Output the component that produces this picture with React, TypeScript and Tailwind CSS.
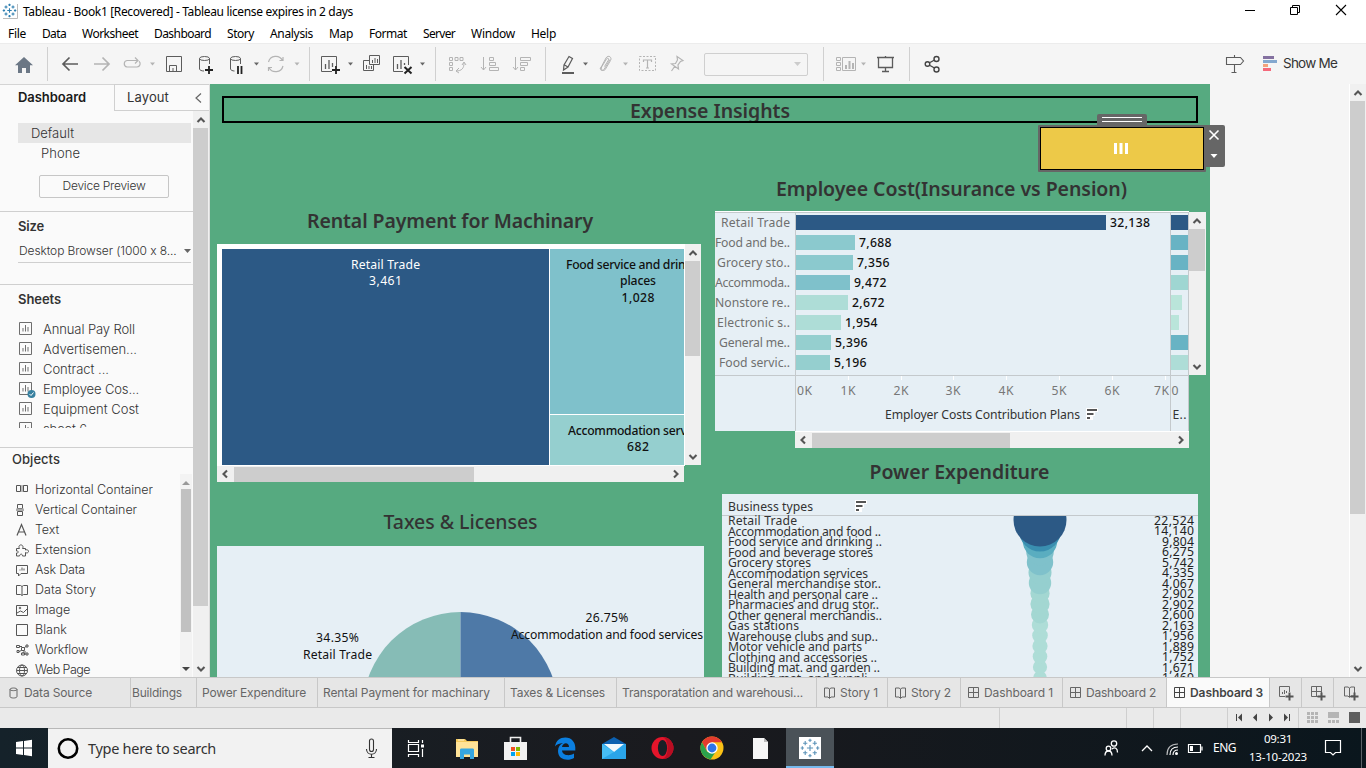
import { useLayoutEffect, useRef } from "react";
import type { ReactNode } from "react";

/* Text run that is tracked so that it fills exactly `w` pixels. */
function Fit({ w, className = "", children }: { w: number; className?: string; children: string }) {
  const ref = useRef<HTMLSpanElement>(null);
  useLayoutEffect(() => {
    const el = ref.current;
    if (!el) return;
    el.style.letterSpacing = "0px";
    const natural = el.getBoundingClientRect().width;
    el.style.letterSpacing = `${(w - natural) / children.length}px`;
  }, [w, children]);
  return (
    <span ref={ref} className={`inline-block shrink-0 whitespace-pre ${className}`}>
      {children}
    </span>
  );
}

/* Drawing slot: its inner coordinates start at (x, y). */
function Slot({ x, y, w, h, children }: { x: number; y: number; w: number; h: number; children?: ReactNode }) {
  return (
    <svg className="block shrink-0" width={w} height={h} viewBox={`${x} ${y} ${w} ${h}`} fill="none">
      {children}
    </svg>
  );
}

const Tool = ({ x, w, children }: { x: number; w: number; children?: ReactNode }) => (
  <Slot x={x} y={44} w={w} h={40}>{children}</Slot>
);

const Caret = ({ x, y = 64, c = "#666" }: { x: number; y?: number; c?: string }) => (
  <path d={`M${x - 2.5} ${y - 1.5}h5l-2.5 3z`} fill={c} />
);

const Divider = () => <div className="h-[34px] w-px shrink-0 bg-[#d0d0d0]" />;

/* ---------- scroll bars ---------- */
function Chevron({ dir }: { dir: "up" | "down" | "left" | "right" }) {
  const d = {
    up: "M1.5 7 5 3.5 8.500 7",
    down: "M1.500 3 5 6.500 8.500 3",
    left: "M7 1.500 3.500 5 7 8.500",
    right: "M3 1.500 6.500 5 3 8.500",
  }[dir];
  return (
    <svg width="10" height="10" viewBox="0 0 10 10" fill="none" stroke="#555" strokeWidth="2.100">
      <path d={d} />
    </svg>
  );
}

function VScroll({ className, thumb }: { className: string; thumb: string }) {
  return (
    <div className={`flex shrink-0 flex-col justify-between bg-[#f0f0f0] ${className}`}>
      <div>
        <div className="flex h-[17px] items-center justify-center pr-px"><Chevron dir="up" /></div>
        <div className={`mr-px bg-[#cdcdcd] ${thumb}`} />
      </div>
      <div className="flex h-[17px] items-center justify-center pr-px"><Chevron dir="down" /></div>
    </div>
  );
}

function HScroll({ className, thumb }: { className: string; thumb: string }) {
  return (
    <div className={`flex h-4 shrink-0 items-center justify-between bg-[#f0f0f0] ${className}`}>
      <div className="flex items-center">
        <div className="flex w-[17px] justify-center pr-px"><Chevron dir="left" /></div>
        <div className={`h-[15px] bg-[#cdcdcd] ${thumb}`} />
      </div>
      <div className="flex w-[17px] justify-center"><Chevron dir="right" /></div>
    </div>
  );
}

/* ---------- title, menu, toolbar ---------- */
function TableauMark({ cx, cy, s, c = "#2f7fb0" }: { cx: number; cy: number; s: number; c?: string }) {
  const plus = (x: number, y: number, r: number) => `M${x - r} ${y}h${2 * r}M${x} ${y - r}v${2 * r}`;
  return (
    <g stroke={c} strokeWidth={Math.max(1.1, s * 0.1)}>
      <path d={plus(cx, cy, 0.32 * s)} />
      <path
        d={
          plus(cx, cy - 0.8 * s, 0.17 * s) + plus(cx, cy + 0.8 * s, 0.17 * s) + plus(cx - 0.8 * s, cy, 0.17 * s) + plus(cx + 0.8 * s, cy, 0.17 * s) +
          plus(cx - 0.5 * s, cy - 0.5 * s, 0.22 * s) + plus(cx + 0.5 * s, cy - 0.5 * s, 0.22 * s) +
          plus(cx - 0.5 * s, cy + 0.5 * s, 0.22 * s) + plus(cx + 0.5 * s, cy + 0.5 * s, 0.22 * s)
        }
      />
    </g>
  );
}

function TitleBar() {
  return (
    <div className="flex h-[22px] items-center justify-between text-[12px] text-black">
      <div className="flex items-center">
        <Slot x={0} y={0} w={23} h={22}>
          <path d="M3 18.500h14.500V4" stroke="#bbb" />
          <TableauMark cx={9.5} cy={10.5} s={7} />
        </Slot>
        <Fit w={330} className="pt-0.5">Tableau - Book1 [Recovered] - Tableau license expires in 2 days</Fit>
      </div>
      <Slot x={1236} y={0} w={130} h={22}>
        <g stroke="#000">
          <path d="M1245 10.500h10" />
          <path d="M1290.500 7.500h7v7h-7zM1292.500 7v-1.500h7v7h-1.500" />
          <path d="m1336 5 10 10m0-10-10 10" strokeWidth="1.100" />
        </g>
      </Slot>
    </div>
  );
}

const menus: [string, number][] = [
  ["File", 18], ["Data", 24], ["Worksheet", 56], ["Dashboard", 57], ["Story", 27], ["Analysis", 43],
  ["Map", 24], ["Format", 38], ["Server", 32], ["Window", 44], ["Help", 25],
];

function Toolbar() {
  const d = "#5c5c5c";
  const l = "#b4b4b4";
  return (
    <div className="flex h-[41px] items-center border-t border-[#ececec] bg-[#f5f5f5]">
      <Tool x={0} w={47}>
        <path d="m24 57-9 8.300h3V73h4v-5h4v5h4v-7.700h3z" fill="#6b7785" />
      </Tool>
      <Divider />
      <Tool x={48} w={42}><path d="M78 64H63m6.500-6.500L63 64l6.500 6.500" stroke={d} strokeWidth="1.700" /></Tool>
      <Tool x={90} w={28}><path d="M94 64h15m-6.500-6.500L109 64l-6.500 6.500" stroke={l} strokeWidth="1.700" /></Tool>
      <Tool x={118} w={40}>
        <path d="M134 60.500h-7a3.300 3.300 0 0 0 0 6.500h10a3.300 3.300 0 0 0 2-5.800M130 60.500h8m-3-3 3 3-3 3" stroke={l} strokeWidth="1.200" />
        <Caret x={152.5} c={l} />
      </Tool>
      <Tool x={158} w={32}>
        <path d="M166.500 56.500h15v15h-15zM169.500 71v-5.500h7V71M173 71v-3" stroke={d} />
      </Tool>
      <Tool x={190} w={30}>
        <g stroke={d}><ellipse cx="204.500" cy="58.500" rx="5" ry="2" /><path d="M199.500 58.500V69c0 1 2 2 4.500 2M209.500 58.500V64" /></g>
        <path d="M209 66v8m-4-4h8" stroke="#222" strokeWidth="1.800" />
      </Tool>
      <Tool x={220} w={42}>
        <g stroke={d}><ellipse cx="235.500" cy="58.500" rx="5" ry="2" /><path d="M230.500 58.500V69c0 1 2 2 4 2M240.500 58.500V64" /></g>
        <path d="M238 66v8m3.500-8v8" stroke="#222" strokeWidth="1.800" />
        <Caret x={256.5} />
      </Tool>
      <Tool x={262} w={47}>
        <path d="M268.500 62a7.500 7.500 0 0 1 14-1.500M283 66a7.500 7.500 0 0 1-14 1.500M279.500 60.500h3.500v-3.500M272 67.500h-3.500v3.500" stroke={l} strokeWidth="1.200" />
        <Caret x={297} c={l} />
      </Tool>
      <Divider />
      <Tool x={310} w={50}>
        <path d="M332 71.500h-10.500v-15h15V66" stroke={d} />
        <path d="M325.500 69v-5m3.500 5v-9m3.500 7v-4" stroke={d} strokeWidth="1.300" />
        <path d="M336 66v8m-4-4h8" stroke="#222" strokeWidth="1.800" />
        <Caret x={350.5} />
      </Tool>
      <Tool x={360} w={26}>
        <path d="M369.500 55.500h10v9h-10zM369 60.500h-5.500v10h10V65M372.500 63v-3m2.500 3v-5m2.500 5v-4M366.500 69v-4m2.500 4v-3m2.500 3v-3" stroke={d} />
      </Tool>
      <Tool x={386} w={49}>
        <path d="M403 71.500h-9.500v-15h15V65" stroke={d} />
        <path d="M397.500 69v-5m3.500 5v-9m3.500 5v-2" stroke={d} strokeWidth="1.300" />
        <path d="m404.500 67 7 6.500m0-6.500-7 6.500" stroke="#222" strokeWidth="2" />
        <Caret x={422.5} />
      </Tool>
      <Divider />
      <Tool x={436} w={39}>
        <path d="M449.500 57.500h3v3h-3zM455 57.500h3v3h-3zM460 57.500h3v3h-3zM449.500 62.500h3v3h-3zM449.500 67.500h3v3h-3zM464 63c0 5-2 8-8 8m6-6 2-3 2 3m-7 3-3 3 3 2" stroke={l} />
      </Tool>
      <Tool x={475} w={30}>
        <path d="M483.500 57v13m-2.500-3 2.500 3 2.500-3M489.500 57.500h4v3h-4zM489.500 62.500h6v3h-6zM489.500 67.500h9v3h-9z" stroke={l} />
      </Tool>
      <Tool x={505} w={40}>
        <path d="M515.500 57v13m-2.500-3 2.500 3 2.500-3M520.500 57.500h10v3h-10zM520.500 62.500h7v3h-7zM520.500 67.500h4v3h-4z" stroke={l} />
      </Tool>
      <Divider />
      <Tool x={546} w={49}>
        <path d="m569 56.500 3.500 2-4.500 8.500-4.500 3 .500-5zM564.500 65l3.500 2" stroke={d} strokeWidth="1.200" />
        <path d="M562 73h12" stroke={d} strokeWidth="2" />
        <Caret x={585.5} />
      </Tool>
      <Tool x={595} w={40}>
        <path d="m602 65.500 4-7.500c2-3.500 6.500-1 4.500 2.500l-5 8.500c-1.500 3-5.500.800-4-2M602 65.500l-2 3.500m4.500-2.500 4-6.500c.8-1.500-1-2.500-2-1l-5.500 9c-1.500 2.500 1.500 3.500 3 1.500l6-10" stroke={l} />
        <Caret x={625.5} c={l} />
      </Tool>
      <Tool x={635} w={30}>
        <path d="M639.500 56.500h16v14h-16z" stroke={l} strokeDasharray="2 1.500" />
        <path d="M643.500 62v-2h8v2M647.500 60v8m-1.500 0h3" stroke={l} strokeWidth="1.200" />
      </Tool>
      <Tool x={665} w={39}>
        <path d="m677 56.500 6 4-2.500 1-2.500 3.500.5 4-7-5 4-.5 2-3.500zM675 66l-3.500 5" stroke={l} strokeWidth="1.200" />
      </Tool>
      <div className="flex h-[23px] w-[104px] items-center justify-end rounded-[2px] border border-[#cfcfcf] pr-1.5">
        <svg width="7" height="4"><path d="M0 0h7L3.500 4z" fill="#ccc" /></svg>
      </div>
      <div className="w-[15px] shrink-0" />
      <Divider />
      <Tool x={824} w={51}>
        <path d="M836.500 57.500h4v3h-4zM836.500 62.500h4v3h-4zM836.500 67.500h4v3h-4zM842.500 57.500h13v13h-13z" stroke={l} />
        <path d="M846 69v-4m3.500 4v-8m3.500 8v-6" stroke={l} strokeWidth="2" />
        <Caret x={863.5} c={l} />
      </Tool>
      <Tool x={875} w={34}>
        <path d="M877 57.500h17M885.500 56v1.500M885.500 68v3.500m-3.500 0h7" stroke={d} strokeWidth="1.300" />
        <path d="M878.500 58v9.500h14V58" stroke={d} strokeWidth="1.300" />
      </Tool>
      <Divider />
      <Tool x={910} w={40}>
        <g stroke="#444" strokeWidth="1.400"><circle cx="927.500" cy="64" r="2.300" /><circle cx="936.500" cy="59" r="2.500" /><circle cx="936.500" cy="69.500" r="2.500" /><path d="m930 62.500 4.500-2.500m-4.500 5.500 4.500 2.500" /></g>
      </Tool>
      <div className="flex-1" />
      <Tool x={1216} w={67}>
        <path d="M1226.500 57.500h14l3 3.500-3 3.500h-14zM1234.500 55v2.500m0 7v8m-3 0h5" stroke={d} strokeWidth="1.100" />
        <path d="M1263 56h11v3h-11z" fill="#8471a0" />
        <path d="M1263 60h14v3h-14z" fill="#84a8cf" />
        <path d="M1263 64h5v3h-5z" fill="#f2a27c" />
        <path d="M1263 68h8v3h-8z" fill="#f5697b" />
      </Tool>
      <Fit w={54} className="mr-[29px] pb-px font-['Inter'] text-[13.500px] text-[#333]">Show Me</Fit>
    </div>
  );
}

/* ---------- side panel ---------- */
function SheetIcon({ checked = false }: { checked?: boolean }) {
  return (
    <svg className="block shrink-0" width="18" height="20" viewBox="0 0 18 20" fill="none">
      <path d="M1.500 2.500h12v12h-12z" stroke="#6e6e6e" />
      <path d="M5 11.500V8m2.500 3.500V5m2.500 6.500V7" stroke="#6e6e6e" />
      {checked && (
        <g><circle cx="13.500" cy="14" r="4" fill="#37809f" /><path d="m11.500 14 1.500 1.500 2.500-3" stroke="#fff" /></g>
      )}
    </svg>
  );
}

const sheets: [string, number][] = [
  ["Annual Pay Roll", 92], ["Advertisemen...", 94], ["Contract ...", 66], ["Employee Cos...", 96],
  ["Equipment Cost", 96], ["sheet 6", 44],
];

const objects: [string, number, ReactNode][] = [
  ["Horizontal Container", 118, <g><path d="M6 4h3v7H6z" fill="#bbb" stroke="none" /><path d="M1.500 4.500h4v6h-4zM8.500 4.500h4v6h-4z" /></g>],
  ["Vertical Container", 102, <g><path d="M2.500 3.500h5v4h-5zM2.500 10.500h5v4h-5z" /><path d="M1 7.500h8v2.500H1z" fill="#aaa" stroke="none" /></g>],
  ["Text", 24, <path d="m2 14.500 4.500-11 4.500 11M3.500 11h6" strokeWidth="1.200" />],
  ["Extension", 56, <path d="M1.500 7.500h3C3 5 5 3.500 6.500 4S8.500 6 7.500 7.500h3V9c2-1 3 .5 3 1.500s-1.500 2-3 1v3.500H7.500c0-2.500-2.500-2.500-3 0h-3V12c2.500 0 2.500-2 0-2z" />],
  ["Ask Data", 50, <g><path d="M1.500 4.500h11v8H6L3.500 15v-2.500h-2z" /><path d="M5 9.500v-1m2 1v-3m2 3v-2" /></g>],
  ["Data Story", 61, <path d="M7 5.500 5.500 4.500h-4v9h4L7 14.500l1.500-1h4v-9h-4zV14" />],
  ["Image", 35, <g><path d="M1.500 4.500h11v10h-11z" /><path d="m2 12 3.500-2 3 1.500 4-4" /><circle cx="5" cy="7" r=".8" /></g>],
  ["Blank", 32, <path d="M1.500 3.500h11v11h-11z" />],
  ["Workflow", 53, <path d="M1.500 4.500h3v2h-3zM6.500 6.500h3v3h-3zM11 4h2v2h-2zM2 9.500h2v2H2zM6.500 12h3v2h-3zM11 12h2v2h-2zM4.500 5.500H7m2.500 1L11 5.500M4 10.500l2.500-1m3 3.500H11m0-2H8v1.500" />],
  ["Web Page", 55, <g><circle cx="7" cy="9.500" r="5.500" /><ellipse cx="7" cy="9.500" rx="2.500" ry="5.500" /><path d="M1.500 9.500h11M2.500 6.500h9m-9 6h9" /></g>],
];

function SidePanel() {
  return (
    <div className="flex w-[210px] shrink-0 flex-col border-r border-[#dcdcdc] bg-[#fafafa] font-['Inter'] text-[13px] font-light text-[#333]">
      <div className="flex h-[27px] shrink-0">
        <div className="flex w-[114px] items-center border-t border-[#d4d4d4] pl-[18px]">
          <Fit w={68} className="font-semibold text-[#1a1a1a]">Dashboard</Fit>
        </div>
        <div className="flex flex-1 items-center justify-between border-y border-l border-[#d0d0d0] pl-3 pr-[7px]">
          <Fit w={42} className="font-normal">Layout</Fit>
          <svg width="7" height="10" fill="none" stroke="#666" strokeWidth="1.200"><path d="M6 .5 1 5l5 4.500" /></svg>
        </div>
      </div>
      <div className="flex min-h-0 flex-1">
        <div className="flex w-[193px] shrink-0 flex-col overflow-hidden">
          <div className="ml-[18px] mr-[2px] mt-3 flex h-5 shrink-0 items-center bg-[#e6e6e6] pl-[13px] pt-px"><Fit w={43}>Default</Fit></div>
          <div className="flex h-5 shrink-0 items-center pl-[41px] pt-px"><Fit w={39}>Phone</Fit></div>
          <div className="ml-[39px] mt-3 flex h-[23px] w-[130px] shrink-0 items-center justify-center rounded-[2px] border border-[#c6c6c6] pb-px text-[12px]"><Fit w={83}>Device Preview</Fit></div>
          <div className="mt-[13px] h-px shrink-0 bg-[#cfcfcf]" />
          <div className="mt-[5px] flex h-5 shrink-0 items-center pl-[18px]"><Fit w={26} className="font-semibold text-[#333]">Size</Fit></div>
          <div className="ml-[18px] mr-[2px] mt-1 flex h-[22px] shrink-0 items-center justify-between border-b border-[#cfcfcf] pb-px text-[12px]">
            <Fit w={160} className="pl-px">Desktop Browser (1000 x 8...</Fit>
            <svg width="7" height="4"><path d="M0 0h7L3.500 4z" fill="#666" /></svg>
          </div>
          <div className="mt-[21px] h-px shrink-0 bg-[#cfcfcf]" />
          <div className="mt-[5px] flex h-5 shrink-0 items-center pl-[18px]"><Fit w={43} className="font-semibold text-[#333]">Sheets</Fit></div>
          <div className="mt-[9px] flex h-[109px] shrink-0 flex-col overflow-hidden pl-[18px] pt-px">
            {sheets.map(([n, w]) => (
              <div key={n} className="flex h-5 shrink-0 items-center">
                <SheetIcon checked={n.startsWith("Employee")} />
                <Fit w={w} className="ml-[7px]">{n}</Fit>
              </div>
            ))}
          </div>
          <div className="mt-[19px] h-px shrink-0 bg-[#cfcfcf]" />
          <div className="mt-[2px] flex h-5 shrink-0 items-center pl-3"><Fit w={48} className="font-medium text-[#333]">Objects</Fit></div>
          <div className="flex min-h-0 flex-1 justify-between pl-[15px]">
            <div className="flex flex-col overflow-hidden pt-[10px]">
              {objects.map(([n, w, icon]) => (
                <div key={n} className="flex h-5 shrink-0 items-center text-[12.500px]">
                  <svg className="block shrink-0" width="16" height="18" viewBox="0 0 16 18" fill="none" stroke="#555">{icon}</svg>
                  <Fit w={w} className="ml-1">{n}</Fit>
                </div>
              ))}
            </div>
            <div className="mr-px mt-1 flex w-3 flex-col items-center justify-between bg-[#f3f3f3] pb-1.5">
              <div className="flex flex-col items-center">
                <svg width="8" height="15"><path d="M0 11h8L4 7z" fill="#999" /></svg>
                <div className="h-[143px] w-2.5 bg-[#c1c1c1]" />
              </div>
              <svg width="8" height="4"><path d="M0 0h8L4 4z" fill="#444" /></svg>
            </div>
          </div>
        </div>
        <VScroll className="w-4" thumb="h-[478px]" />
      </div>
    </div>
  );
}

/* ---------- charts ---------- */
type TProps = { x: number; y: number; w: number; c?: string; a?: "start" | "middle" | "end"; s?: number; b?: boolean; children: string };
function T({ x, y, w, c = "#111", a = "start", s = 12.2, b = false, children }: TProps) {
  return (
    <text x={x} y={y} textLength={w} textAnchor={a} fontSize={s} fill={c} fontWeight={b ? 500 : 400} fontFamily="'Noto Sans', sans-serif">
      {children}
    </text>
  );
}

const SortGlyph = ({ x, y }: { x: number; y: number }) => (
  <g><path d={`M${x - 1} ${y - 1}h12v4h-3v4h-2v4h-7z`} fill="#fff" /><path d={`M${x} ${y + 1}h10M${x} ${y + 5}h6.500M${x} ${y + 9}h3`} stroke="#555" strokeWidth="2" /></g>
);

function Heading({ w, className = "", children }: { w: number; className?: string; children: string }) {
  return (
    <div className={`flex justify-center font-['Noto_Sans'] text-[19.500px] leading-[26px] text-[#333] ${className}`}>
      <Fit w={w}>{children}</Fit>
    </div>
  );
}

function RentalChart() {
  return (
    <div className="ml-[7px] w-[484px]">
      <div className="flex">
        <svg className="block bg-white" width="468" height="222" viewBox="217 244 468 222">
          <defs><clipPath id="rental"><path d="M217 244h467v222H217z" /></clipPath></defs>
          <path d="M222 249h327v216H222z" fill="#2c5985" />
          <path d="M550 249h134v165H550z" fill="#7fc1cb" />
          <path d="M550 415h134v50H550z" fill="#95cfcf" />
          <g clipPath="url(#rental)">
            <T x={385.5} y={269} w={69} a="middle" c="#fff">Retail Trade</T>
            <T x={385.5} y={285} w={33} a="middle" c="#fff">3,461</T>
            <T x={566} y={269} w={144} b>Food service and drinking</T>
            <T x={638} y={285} w={36} a="middle" b>places</T>
            <T x={638} y={302} w={33} a="middle" b>1,028</T>
            <T x={568} y={435} w={140} b>Accommodation services</T>
            <T x={638} y={451} w={22} a="middle" b>682</T>
          </g>
        </svg>
        <VScroll className="h-[221px] w-4" thumb="h-[95px]" />
      </div>
      <HScroll className="w-[467px]" thumb="w-[240px]" />
    </div>
  );
}

const bars: [string, number, number, string, string, number, string][] = [
  ["Retail Trade", 69, 310, "32,138", "#2c5985", 17, "#2c5985"],
  ["Food and be..", 75, 59, "7,688", "#8bc9ce", 17, "#68b3c4"],
  ["Grocery sto..", 73, 57, "7,356", "#8bc9ce", 17, "#68b3c4"],
  ["Accommoda..", 75, 54, "9,472", "#7fc1cb", 17, "#9fd6d2"],
  ["Nonstore re..", 75, 52, "2,672", "#aeddd7", 11, "#bae5da"],
  ["Electronic s..", 73, 45, "1,954", "#aeddd7", 8, "#bae5da"],
  ["General me..", 71, 35, "5,396", "#95cfcf", 17, "#68b3c4"],
  ["Food servic..", 71, 34, "5,196", "#95cfcf", 17, "#aeddd7"],
];

function EmployeeChart() {
  const ticks = [848.5, 901.5, 953.5, 1006.5, 1059.5, 1112.5, 1165.5];
  return (
    <div className="flex w-[491px]">
      <div>
        <svg className="block bg-[#e6eff5]" width="474" height="220" viewBox="715 211 474 220">
          <path d="M715 211.500h474" stroke="#fff" />
          {bars.map(([n, lw, bw, v, c, w2, c2], i) => (
            <g key={n}>
              <T x={790} y={227 + i * 20} w={lw} a="end" c="#6f6f6f">{n}</T>
              <rect x="796" y={215 + i * 20} width={bw} height="15" fill={c} />
              <rect x="1171" y={215 + i * 20} width={w2} height="15" fill={c2} />
              <T x={800 + bw} y={227 + i * 20} w={i ? 32.5 : 40} b>{v}</T>
            </g>
          ))}
          <path d="M715 212.500h474M715 375.500h474M795.500 212v219M1170.500 212v219M1188.500 212v219" stroke="#c4c9cc" />
          {ticks.map((x, i) => (
            <g key={x}>
              <path d={`M${x} 376v4`} stroke="#fff" />
              {i < 6 && <T x={x - 0.5} y={395} w={15} a="middle" c="#777">{`${i + 1}K`}</T>}
            </g>
          ))}
          <T x={797} y={395} w={15} c="#777">0K</T>
          <T x={1154} y={395} w={15} c="#777">7K</T>
          <T x={1171.5} y={395} w={7} c="#777">0</T>
          <T x={885} y={419} w={195} c="#333">Employer Costs Contribution Plans</T>
          <SortGlyph x={1087} y={409} />
          <T x={1172.5} y={419} w={14} c="#333">E..</T>
        </svg>
        <div className="ml-20 bg-white pt-px">
          <HScroll className="w-full" thumb="w-[198px]" />
        </div>
      </div>
      <VScroll className="mt-px h-[163px] w-[17px]" thumb="h-[42px]" />
    </div>
  );
}

const power: [string, number, string, number, string][] = [
  ["Retail Trade", 69, "22,524", 26.5, "#2c5985"],
  ["Accommodation and food ..", 153, "14,140", 21, "#3a8fb0"],
  ["Food service and drinking ..", 154, "9,804", 17.300, "#5aadc0"],
  ["Food and beverage stores", 145, "6,275", 13.8, "#7fc1cb"],
  ["Grocery stores", 83, "5,742", 13.2, "#7fc1cb"],
  ["Accommodation services", 140, "4,335", 11.5, "#95cfcf"],
  ["General merchandise stor..", 153, "4,067", 11.2, "#95cfcf"],
  ["Health and personal care ..", 150, "2,902", 9.6, "#a3d7d2"],
  ["Pharmacies and drug stor..", 151, "2,902", 9.6, "#a3d7d2"],
  ["Other general merchandis..", 154, "2,600", 9, "#a3d7d2"],
  ["Gas stations", 71, "2,163", 8.2, "#aeddd7"],
  ["Warehouse clubs and sup..", 150, "1,956", 7.8, "#aeddd7"],
  ["Motor vehicle and parts", 134, "1,889", 7.6, "#aeddd7"],
  ["Clothing and accessories ..", 149, "1,752", 7.3, "#aeddd7"],
  ["Building mat. and garden ..", 152, "1,671", 7.1, "#aeddd7"],
  ["Building mat. and suppli..", 146, "1,469", 6.7, "#aeddd7"],
];

function PowerChart() {
  return (
    <svg className="ml-[7px] block bg-[#e6eff5]" width="476" height="183" viewBox="722 494 476 183">
      <defs><clipPath id="power"><path d="M722 516h476v161H722z" /></clipPath></defs>
      <T x={728} y={511} w={85} c="#333">Business types</T>
      <SortGlyph x={856} y={501} />
      <path d="M722 515.500h476" stroke="#c4c9cc" />
      <g clipPath="url(#power)">
        {power.map((_, k) => {
          const i = power.length - 1 - k;
          return <circle key={i} cx="1040" cy={520 + i * 10.5} r={power[i][3]} fill={power[i][4]} />;
        })}
      </g>
      {power.map(([n, w, v], i) => (
        <g key={n}>
          <T x={728} y={525 + Math.round(i * 10.5)} w={w} c="#333">{n}</T>
          <T x={1194} y={525 + Math.floor(i * 10.5)} w={v.length > 5 ? 40 : 32} a="end" c="#222">{v}</T>
        </g>
      ))}
    </svg>
  );
}

function TaxesChart() {
  return (
    <svg className="ml-[7px] block bg-[#e6eff5]" width="487" height="131" viewBox="217 546 487 131">
      <path d="M460.500 709.600V612a97.600 97.600 0 0 0 0 195.200z" fill="#86bcb6" />
      <path d="M460.500 709.600V612a97.600 97.600 0 0 1 0 195.200z" fill="#4e79a7" />
      <T x={607} y={622} w={43} a="middle">26.75%</T>
      <T x={511} y={639} w={192}>Accommodation and food services</T>
      <T x={337.5} y={642} w={43} a="middle">34.35%</T>
      <T x={337.5} y={659} w={69} a="middle">Retail Trade</T>
    </svg>
  );
}

function Workspace() {
  return (
    <div className="relative flex min-w-0 flex-1 bg-[#f5f5f5]">
      <div className="flex w-[1000px] shrink-0 flex-col overflow-hidden bg-[#56aa80]">
        <div className="ml-3 mt-3 flex h-[27px] w-[976px] shrink-0 items-center justify-center overflow-hidden border-2 border-black">
          <Heading w={160} className="pt-0.5 font-semibold">Expense Insights</Heading>
        </div>
        <div className="flex">
          <div className="w-[505px] shrink-0">
            <Heading w={286} className="mb-[10px] mt-[85px] pr-[25px] font-semibold">Rental Payment for Machinary</Heading>
            <RentalChart />
            <Heading w={154} className="mb-[11px] mt-[27px] pr-[4px] font-medium">Taxes &amp; Licenses</Heading>
            <TaxesChart />
          </div>
          <div className="w-[495px] shrink-0">
            <Heading w={351} className="mb-[9px] mt-[53px] pr-[22px] font-semibold">Employee Cost(Insurance vs Pension)</Heading>
            <EmployeeChart />
            <Heading w={180} className="mb-[9px] mt-[11px] pr-[6px] font-semibold">Power Expenditure</Heading>
            <PowerChart />
          </div>
        </div>
      </div>
      <div className="absolute left-[828px] top-[30px]">
        <div className="ml-[59px] flex h-[11px] w-[50px] flex-col gap-[3px] rounded-t-[2px] bg-[#666] px-[5px] pt-[3px]">
          <div className="h-px bg-white" />
          <div className="h-px bg-white" />
        </div>
        <div className="flex items-start">
          <div className="h-[47px] w-[168px] rounded-[1px] bg-[#666] p-[2px]">
            <div className="flex h-[43px] w-[164px] items-center justify-center border border-black bg-[#edc948] pr-0.5">
              <svg width="14" height="11"><path d="M0 0h3v11H0zM5.500 0h3v11h-3zM11 0h3v11h-3z" fill="#fff" /></svg>
            </div>
          </div>
          <svg className="-ml-px block rounded-r-[2px] bg-[#666]" width="20" height="42" fill="none">
            <path d="m4.500 5.500 9 9m0-9-9 9" stroke="#fff" strokeWidth="1.600" />
            <path d="M5.500 29h7L9 33z" fill="#fff" />
          </svg>
        </div>
      </div>
      <div className="flex-1" />
      <VScroll className="w-[17px] border-l border-white" thumb="h-[413px]" />
    </div>
  );
}

/* ---------- sheet tabs and status bar ---------- */
type Kind = "data" | "story" | "dash" | null;
function TabGlyph({ kind, dark = false, plus = false }: { kind: Exclude<Kind, null> | "sheet"; dark?: boolean; plus?: boolean }) {
  const d = {
    data: "M3 3.500c0-2 7-2 7 0v7c0 2-7 2-7 0zM3 3.500c0 1.500 7 1.500 7 0",
    story: "M6.500 3 5 2H1.500v9H5l1.500 1.500L8 11h3.500V2H8zV12",
    dash: "M1.500 1.500h10v10h-10zM6.500 1.500v10M1.500 6.500h10",
    sheet: "M7 11.500H1.500v-10h10V7M4.500 9V7M6.500 9V5M8.500 8V6",
  }[kind];
  return (
    <svg className="block shrink-0" width={plus ? 17 : 13} height={plus ? 17 : 13} viewBox={plus ? "0 0 17 17" : "0 0 13 13"} fill="none" stroke={dark ? "#444" : "#666"}>
      <path d={d} />
      {plus && <path d="M11.500 7.500v8m-4-4h8" stroke="#555" strokeWidth="2" />}
    </svg>
  );
}

const tabs: { t: string; tw: number; cls: string; kind: Kind; active?: boolean }[] = [
  { t: "Data Source", tw: 68, cls: "w-[131px] pl-[7px] gap-[4px]", kind: "data" },
  { t: "Buildings", tw: 50, cls: "w-[66px] pl-px", kind: null },
  { t: "Power Expenditure", tw: 104, cls: "w-[121px] pl-[5px]", kind: null },
  { t: "Rental Payment for machinary", tw: 167, cls: "w-[187px] pl-[5px]", kind: null },
  { t: "Taxes & Licenses", tw: 95, cls: "w-[112px] pl-[5px]", kind: null },
  { t: "Transporatation and warehousi...", tw: 181, cls: "w-[200px] pl-[5px]", kind: null },
  { t: "Story 1", tw: 38, cls: "w-[71px] pl-[6px] gap-[4px]", kind: "story" },
  { t: "Story 2", tw: 40, cls: "w-[73px] pl-[6px] gap-[4px]", kind: "story" },
  { t: "Dashboard 1", tw: 69, cls: "w-[102px] pl-[6px] gap-[4px]", kind: "dash" },
  { t: "Dashboard 2", tw: 70, cls: "w-[104px] pl-[6px] gap-[4px]", kind: "dash" },
  { t: "Dashboard 3", tw: 73, cls: "w-[103px] pl-[6px] gap-[4px]", kind: "dash", active: true },
];

function SheetTabs() {
  return (
    <div className="flex h-[31px] shrink-0 border-y border-[#c8c8c8] bg-[#e6e6e6] font-['Inter'] text-[12px] text-[#666]">
      {tabs.map((t) => (
        <div key={t.t} className={`flex shrink-0 items-center border-r border-[#c8c8c8] ${t.cls} ${t.active ? "bg-[#fafafa] font-semibold text-[#444]" : ""}`}>
          {t.kind && <TabGlyph kind={t.kind} dark={t.active} />}
          <Fit w={t.tw}>{t.t}</Fit>
        </div>
      ))}
      <div className="flex w-8 items-center justify-center border-r border-[#c8c8c8] pl-0.5 pt-0.5"><TabGlyph kind="sheet" plus /></div>
      <div className="flex w-8 items-center justify-center border-r border-[#c8c8c8] pl-0.5 pt-0.5"><TabGlyph kind="dash" plus /></div>
      <div className="flex w-8 items-center justify-center pl-0.5 pt-0.5"><TabGlyph kind="story" plus /></div>
    </div>
  );
}

function StatusBar() {
  return (
    <div className="flex h-5 shrink-0 justify-end bg-[#eaeaea]">
      <div className="w-[127px] border-l border-[#cfcfcf]" />
      <div className="w-[27px] border-l border-[#cfcfcf]" />
      <div className="w-[27px] border-l border-[#cfcfcf]" />
      <div className="w-[47px] border-l border-[#cfcfcf]" />
      <div className="border-l border-[#cfcfcf]">
        <Slot x={1228} y={708} w={70} h={20}>
          <path d="M1236.500 714v7M1289.500 714v7" stroke="#444" />
          <path d="M1242 713.500v8l-4-4zM1257 713.500v8l-4-4zM1269 713.500v8l4-4zM1284 713.500v8l4-4z" fill="#444" />
        </Slot>
      </div>
      <div className="border-l border-[#cfcfcf]">
        <Slot x={1299} y={708} w={67} h={20}>
          <path d="M1307 713.500h11M1307 717.500h11M1307 721.500h11" stroke="#b5b5b5" strokeWidth="3" strokeDasharray="3 1" />
          <path d="M1328 712h11v6h-11z" fill="#b5b5b5" />
          <path d="M1328 721.500h11" stroke="#b5b5b5" strokeWidth="3" strokeDasharray="3 1" />
          <path d="M1349 712h11v11h-11z" fill="#5e5e5e" />
        </Slot>
      </div>
    </div>
  );
}

/* ---------- Windows task bar ---------- */
const Task = ({ x, w, children }: { x: number; w: number; children?: ReactNode }) => (
  <Slot x={x} y={728} w={w} h={40}>{children}</Slot>
);

function TaskBar() {
  return (
    <div className="flex h-10 shrink-0 bg-linear-to-r from-[#15222a] via-[#1a1a1e] to-[#0a161d] text-white">
      <Task x={0} w={48}>
        <path d="m16 742 7-1v6.500h-7zM24 740.900l8-1.100v7.700h-8zM16 748.500h7v6.500l-7-1zM24 748.500h8v7.700l-8-1.100z" fill="#fff" />
      </Task>
      <div className="flex w-[344px] shrink-0 items-center border-t border-[#b8b8b8] bg-[#f2f2f2]">
        <Task x={48} w={40}><circle cx="68" cy="747.500" r="9.200" stroke="#000" strokeWidth="2.600" /></Task>
        <Fit w={128} className="text-[14.500px] text-[#333]">Type here to search</Fit>
        <div className="flex-1" />
        <Task x={352} w={40}>
          <path d="M369.500 740a2 2 0 0 1 4 0v8.500a2 2 0 0 1-4 0zM366.500 748c0 7 10 7 10 0M371.500 753.500v3m-3 0h6" stroke="#333" strokeWidth="1.100" />
        </Task>
      </div>
      <Task x={392} w={50}>
        <path d="M408.500 740v2.500h10V740M408.500 757v-2.500h10v2.500M408.500 744.500h10v7h-10zM422.500 740v3m0 6v8" stroke="#fff" strokeWidth="1.200" />
        <path d="M421 744.500h3v3h-3z" fill="#fff" />
      </Task>
      <Task x={442} w={49}>
        <path d="M456 739h9l2 2h11v16h-22z" fill="#f4c95d" />
        <path d="M456 742h22v15h-22z" fill="#ffe398" />
        <path d="M460 759v-9c0-1 .5-1.500 1.500-1.500h11c1 0 1.500.5 1.500 1.500v9h-4v-4.500h-6v4.500z" fill="#35a6e0" />
        <path d="M458 740h6" stroke="#fff6d0" />
      </Task>
      <Task x={491} w={49}>
        <path d="M510.500 743v-5.500h10v5.500" stroke="#eee" strokeWidth="1.600" />
        <path d="M504 742h23v18h-23z" fill="#f2f2f2" />
        <path d="M511 747h4v4h-4z" fill="#f25022" /><path d="M516 747h4v4h-4z" fill="#7fba00" />
        <path d="M511 752h4v4h-4z" fill="#00a4ef" /><path d="M516 752h4v4h-4z" fill="#ffb900" />
      </Task>
      <Task x={540} w={49}>
        <path d="M555 746.500c1-6 5-9 10.300-9 6.500 0 10 5 10 10v3H562c.3 5 7.500 6 12 3v4.500c-6 3.500-16 2-16-7 0-4 2-6.500 5-8-4 .3-7 2-8 3.500zM562 747h7c0-5-6-5-7 0z" fill="#0b7fe0" fillRule="evenodd" />
      </Task>
      <Task x={589} w={49}>
        <path d="m602 744 12-7 12 7v3h-24z" fill="#0c60b0" />
        <path d="M602 744h24v15h-24z" fill="#2aa5ea" />
        <path d="M604 744h20l-10 8z" fill="#f2f8fc" />
        <path d="m602 744 12 8-12 7z" fill="#46bdf5" />
      </Task>
      <Task x={638} w={49}>
        <ellipse cx="662.500" cy="748" rx="11" ry="11" fill="#e5152b" />
        <path d="M662.500 737a11 11 0 0 1 0 22c7-2 7-20 0-22z" fill="#b90d22" />
        <ellipse cx="662.500" cy="748" rx="4.600" ry="8" fill="#1a2026" />
      </Task>
      <Task x={687} w={49}>
        <circle cx="712" cy="748" r="11.500" fill="#fbc116" />
        <path d="M702 742.200a11.500 11.500 0 0 1 20 0H712v3l-5 6z" fill="#e33b2e" />
        <path d="M702 742.200a11.500 11.500 0 0 0 8.500 17.200l5.300-8-8.600.4z" fill="#2ba24c" />
        <circle cx="712" cy="748" r="5.700" fill="#fff" />
        <circle cx="712" cy="748" r="4.400" fill="#2f75e8" />
      </Task>
      <Task x={736} w={50}>
        <path d="M753 738h11l4 4v17h-15z" fill="#f6f6f6" /><path d="M764 738v4h4z" fill="#bbb" />
      </Task>
      <div className="h-10 w-12 shrink-0 border-b-2 border-[#76b9ed] bg-[#4a5258]">
        <Slot x={786} y={728} w={48} h={38}>
          <path d="M799 737h22v22h-22z" fill="#fff" />
          <TableauMark cx={810} cy={748} s={9.6} c="#5b93b8" />
        </Slot>
      </div>
      <div className="flex-1" />
      <Task x={1090} w={123}>
        <g stroke="#fff" strokeWidth="1.300">
          <circle cx="1114" cy="743.500" r="2.700" /><circle cx="1108.500" cy="748.500" r="2.300" />
          <path d="M1105 755.500c0-6 7-6 7 0M1112 749c3-2.500 5.500-.5 5.500 3.500" />
          <path d="m1142 751 5-5 5 5" />
        </g>
        <g stroke="#fff" strokeWidth="1.200"><path d="M1167 755c0-7 4-11 11-11" opacity=".7" /><path d="M1170 755c0-5 3-8 8-8M1173 755c0-3 2-5 5-5" /></g>
        <circle cx="1176.500" cy="753.500" r="1.500" fill="#fff" />
        <path d="M1188.500 744.500h12v8h-12zM1202 746.500v4" stroke="#fff" strokeWidth="1.200" /><path d="M1190 746h3v5h-3z" fill="#fff" />
      </Task>
      <div className="flex items-center text-[12px]"><Fit w={23}>ENG</Fit></div>
      <div className="flex w-[84px] flex-col items-center justify-center pb-px text-[11.500px] leading-[18px]">
        <Fit w={28}>09:31</Fit>
        <Fit w={58}>13-10-2023</Fit>
      </div>
      <Task x={1320} w={46}>
        <path d="M1325.500 740.500h15v12h-5l-2.500 2.500-2.500-2.500h-5z" stroke="#fff" strokeWidth="1.200" />
        <path d="M1361.500 728v40" stroke="#5a6268" />
      </Task>
    </div>
  );
}

export default function App() {
  return (
    <div className="flex h-[768px] w-[1366px] flex-col overflow-hidden bg-white font-['Noto_Sans',sans-serif]">
      <TitleBar />
      <div className="flex h-[21px] shrink-0 items-center gap-4 pl-2 pt-0.5 text-[12px] text-black">
        {menus.map(([m, w]) => <Fit key={m} w={w}>{m}</Fit>)}
      </div>
      <Toolbar />
      <div className="flex h-[593px] shrink-0">
        <SidePanel />
        <Workspace />
      </div>
      <SheetTabs />
      <StatusBar />
      <TaskBar />
    </div>
  );
}
